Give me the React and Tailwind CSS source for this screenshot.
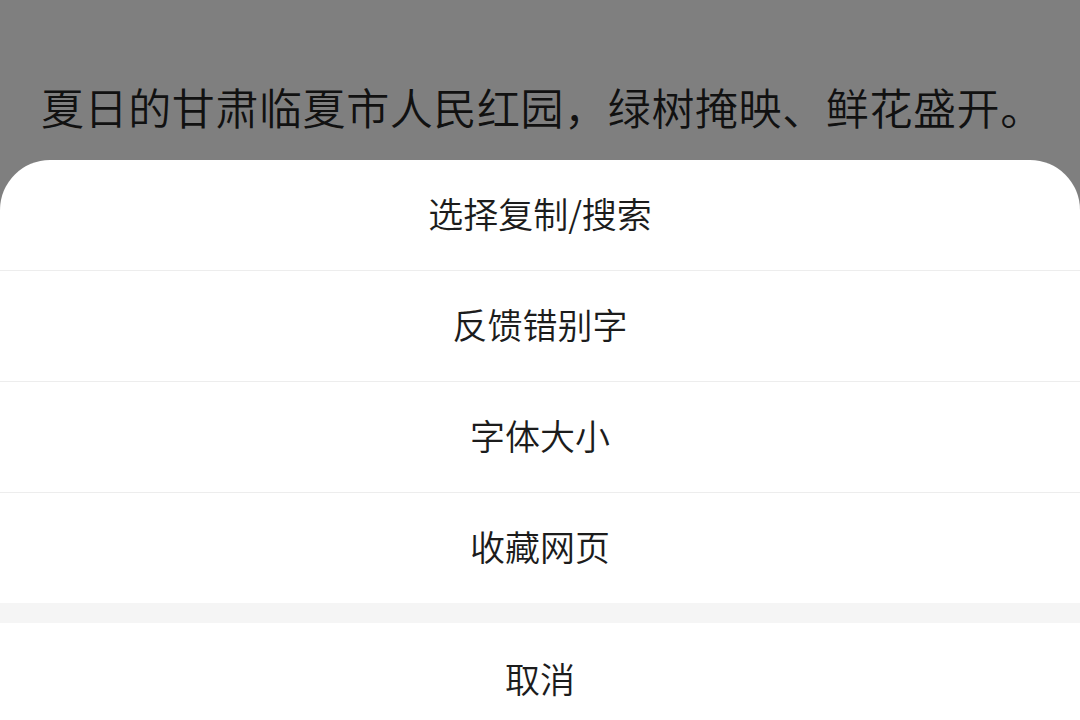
export default function App() {
  const items = ['选择复制/搜索', '反馈错别字', '字体大小', '收藏网页'];

  return (
    <div
      className="h-[720px] w-[1080px] overflow-hidden bg-[#7f7f7f]"
      style={{ fontFamily: '"Noto Sans CJK SC", "Noto Sans", sans-serif' }}
    >
      {/* Article text behind the sheet */}
      <div className="h-[160px] px-[41px] pt-[76px]">
        <p className="text-[43px] leading-[60px] tracking-[0.6px] font-[350] text-[#111111] whitespace-nowrap">
          夏日的甘肃临夏市人民红园，绿树掩映、鲜花盛开。
        </p>
      </div>

      {/* Action sheet */}
      <div className="rounded-t-[50px] bg-white">
        {items.map((item, i) => (
          <div
            key={item}
            className={`flex items-center justify-center pb-[3px] text-[35px] font-[350] text-[#1c1c1c] ${
              i < items.length - 1 ? 'h-[111px] border-b border-[#ededed]' : 'h-[110px]'
            }`}
          >
            {item}
          </div>
        ))}
        <div className="h-[20px] bg-[#f5f5f5]" />
        <div className="flex h-[110px] items-center justify-center text-[35px] font-[350] text-[#1c1c1c]">
          取消
        </div>
      </div>
    </div>
  );
}
